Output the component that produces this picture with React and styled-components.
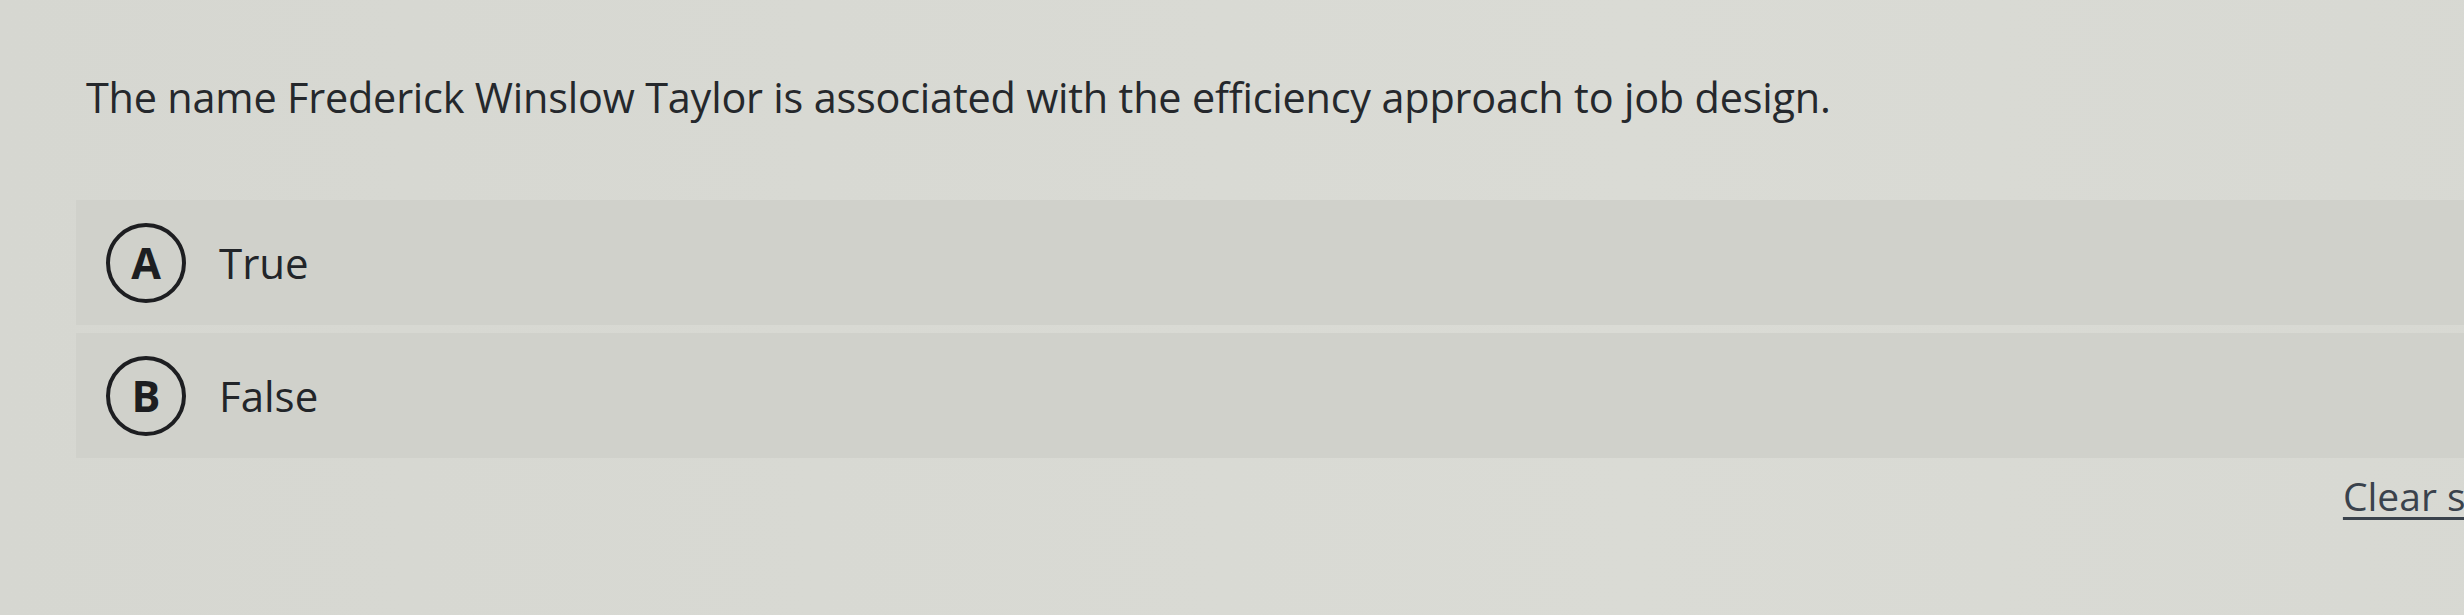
import React from 'react';
import styled, { createGlobalStyle } from 'styled-components';

const GlobalStyle = createGlobalStyle`
  html, body {
    margin: 0;
    padding: 0;
    background: #d8d9d3;
    overflow: hidden;
  }
  body {
    font-family: 'Open Sans', 'Noto Sans', sans-serif;
  }
`;

const options = [
  { letter: 'A', label: 'True' },
  { letter: 'B', label: 'False' },
];

const App = () => {
  return (
    <>
      <GlobalStyle />
      <Page>
        <Question>
          The name Frederick Winslow Taylor is associated with the efficiency approach to job design.
        </Question>
        <OptionList>
          {options.map((opt) => (
            <OptionRow key={opt.letter}>
              <LetterBadge>{opt.letter}</LetterBadge>
              <OptionLabel>{opt.label}</OptionLabel>
            </OptionRow>
          ))}
        </OptionList>
        <Footer>
          <ClearLink href="#">Clear selection</ClearLink>
        </Footer>
      </Page>
    </>
  );
};

export default App;

const Page = styled.main`
  width: 2720px;
  height: 615px;
  padding: 67px 0 0 76px;
  box-sizing: border-box;
  background: linear-gradient(90deg, #d6d7d1 0%, #dadbd5 60%, #d7d8d2 100%);
`;

const Question = styled.p`
  margin: 0 0 0 10px;
  font-size: 41.4px;
  font-weight: 500;
  line-height: 60px;
  color: #25282c;
  letter-spacing: -0.2px;
`;

const OptionList = styled.div`
  display: flex;
  flex-direction: column;
  gap: 8px;
  margin-top: 73px;
`;

const OptionRow = styled.div`
  display: flex;
  align-items: center;
  height: 125px;
  padding-left: 30px;
  gap: 33px;
  background: #d0d1cb;
`;

const LetterBadge = styled.span`
  display: flex;
  align-items: center;
  justify-content: center;
  width: 80px;
  height: 80px;
  box-sizing: border-box;
  border: 4px solid #1d1e21;
  border-radius: 50%;
  font-size: 43px;
  font-weight: 700;
  color: #1d1e21;
`;

const OptionLabel = styled.span`
  font-size: 42px;
  font-weight: 500;
  color: #222529;
`;

const Footer = styled.div`
  display: flex;
  justify-content: flex-end;
  padding: 11px 111px 0 0;
`;

const ClearLink = styled.a`
  font-size: 39px;
  font-weight: 500;
  color: #3a424c;
  text-decoration: underline;
  text-underline-offset: 6px;
  text-decoration-thickness: 3px;
`;
